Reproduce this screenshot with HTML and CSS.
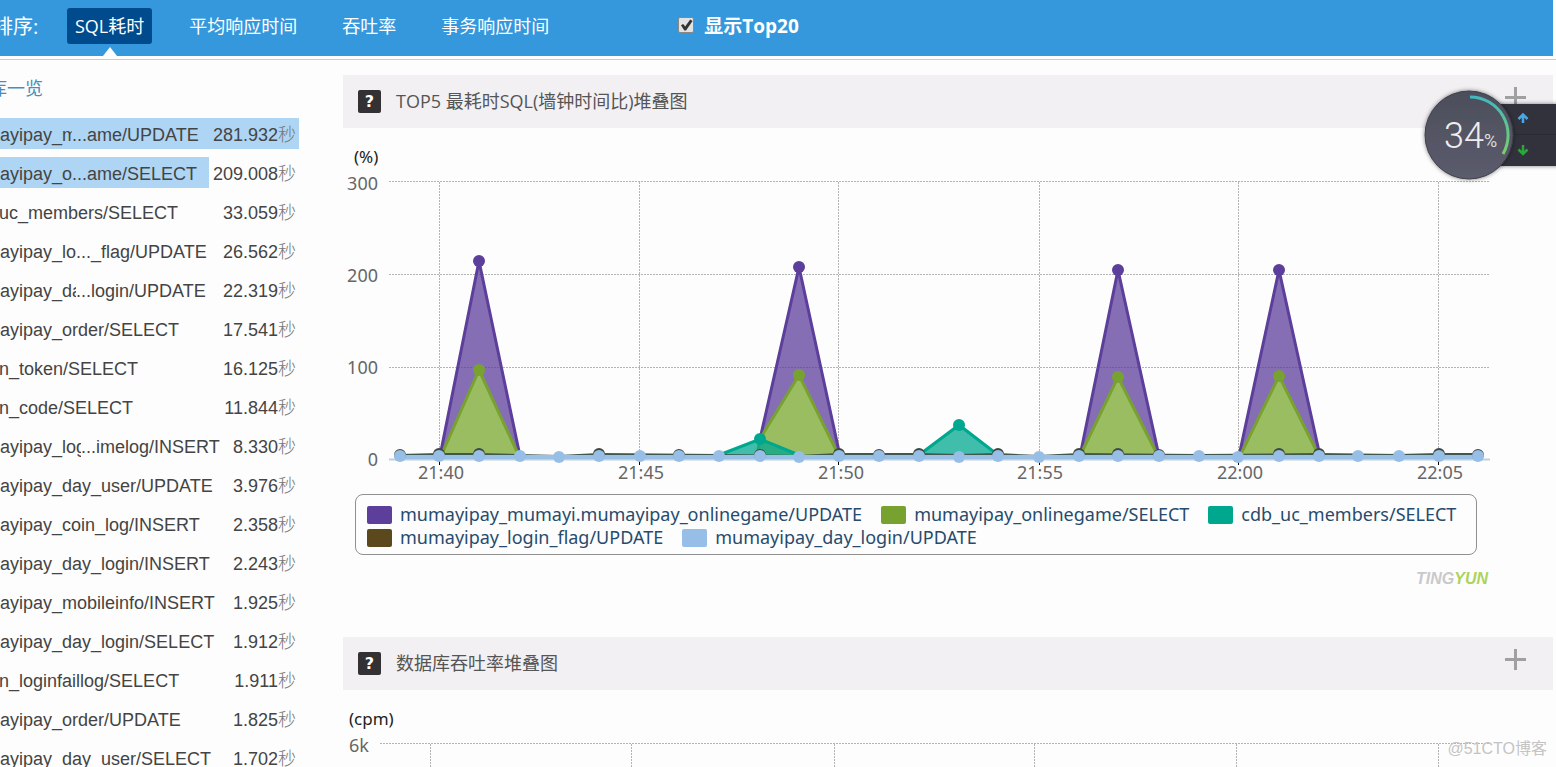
FILE: index.html
```html
<!DOCTYPE html>
<html lang="zh-CN">
<head>
<meta charset="utf-8">
<title>数据库一览</title>
<link rel="stylesheet" href="styles.css">
</head>
<body>
<header class="topbar">
  <span class="sort-label">排序:</span>
  <nav class="tabs">
    <button class="tab tab-active" type="button">SQL耗时</button>
    <button class="tab" type="button">平均响应时间</button>
    <button class="tab" type="button">吞吐率</button>
    <button class="tab" type="button">事务响应时间</button>
  </nav>
  <label class="top20" for="top20"><input class="check" id="top20" type="checkbox" checked>显示Top20</label>
</header>
<div class="layout">
  <aside class="sidebar">
    <a class="side-title" href="#">数据库一览</a>
    <ul class="sql-list">
      <li class="row"><span class="bar" style="width:100%"></span><span class="name"><span class="head" style="width:112px">mumayipay_m</span>...ame/UPDATE</span><span class="time">281.932<i class="unit">秒</i></span></li>
      <li class="row"><span class="bar" style="width:70%"></span><span class="name"><span class="head" style="width:112px">mumayipay_o</span>...ame/SELECT</span><span class="time">209.008<i class="unit">秒</i></span></li>
      <li class="row"><span class="name">cdb_uc_members/SELECT</span><span class="time">33.059<i class="unit">秒</i></span></li>
      <li class="row"><span class="name"><span class="head" style="width:116px">mumayipay_lo</span>..._flag/UPDATE</span><span class="time">26.562<i class="unit">秒</i></span></li>
      <li class="row"><span class="name"><span class="head" style="width:116px">mumayipay_da</span>...login/UPDATE</span><span class="time">22.319<i class="unit">秒</i></span></li>
      <li class="row"><span class="name">mumayipay_order/SELECT</span><span class="time">17.541<i class="unit">秒</i></span></li>
      <li class="row"><span class="name">admin_token/SELECT</span><span class="time">16.125<i class="unit">秒</i></span></li>
      <li class="row"><span class="name">admin_code/SELECT</span><span class="time">11.844<i class="unit">秒</i></span></li>
      <li class="row"><span class="name"><span class="head" style="width:121px">mumayipay_log</span>...imelog/INSERT</span><span class="time">8.330<i class="unit">秒</i></span></li>
      <li class="row"><span class="name">mumayipay_day_user/UPDATE</span><span class="time">3.976<i class="unit">秒</i></span></li>
      <li class="row"><span class="name">mumayipay_coin_log/INSERT</span><span class="time">2.358<i class="unit">秒</i></span></li>
      <li class="row"><span class="name">mumayipay_day_login/INSERT</span><span class="time">2.243<i class="unit">秒</i></span></li>
      <li class="row"><span class="name">mumayipay_mobileinfo/INSERT</span><span class="time">1.925<i class="unit">秒</i></span></li>
      <li class="row"><span class="name">mumayipay_day_login/SELECT</span><span class="time">1.912<i class="unit">秒</i></span></li>
      <li class="row"><span class="name">admin_loginfaillog/SELECT</span><span class="time">1.911<i class="unit">秒</i></span></li>
      <li class="row"><span class="name">mumayipay_order/UPDATE</span><span class="time">1.825<i class="unit">秒</i></span></li>
      <li class="row"><span class="name">mumayipay_day_user/SELECT</span><span class="time">1.702<i class="unit">秒</i></span></li>
    </ul>
  </aside>
  <main class="content">
    <section class="panel">
      <div class="panel-head">
        <button class="help" type="button" aria-label="帮助">?</button>
        <h2 class="panel-title">TOP5 最耗时SQL(墙钟时间比)堆叠图</h2>
        <button class="plus" type="button" aria-label="展开"></button>
      </div>
      <svg class="chart" viewBox="343 128 1210 358" role="img" aria-label="最耗时SQL堆叠图">
        <g class="grid">
          <path d="M389 181.500H1490M389 274.500H1490M389 367.500H1490"/>
          <path d="M439.500 182V459M639.500 182V459M838.500 182V459M1039.500 182V459M1238.500 182V459M1438.500 182V459"/>
        </g>
        <path class="axis" d="M389 459.500H1490"/>
        <path class="tick" d="M439.500 459V465M639.500 459V465M838.500 459V465M1039.500 459V465M1238.500 459V465M1438.500 459V465"/>
        <g class="purple">
          <path d="M440 456L479 261L520 456M760 439L799 267L840 456M1080 456L1118 270L1159 456M1239 456L1279 270L1320 456"/>
          <circle cx="479" cy="261" r="6"/><circle cx="799" cy="267" r="6"/><circle cx="1118" cy="270" r="6"/><circle cx="1279" cy="270" r="6"/>
        </g>
        <g class="green">
          <path d="M441 456L479 370L519 456M757 456L760 439L799 375L839 456M1080 456L1118 377L1158 456M1240 456L1279 376L1319 456"/>
          <circle cx="479" cy="370" r="6"/><circle cx="799" cy="375" r="6"/><circle cx="1118" cy="377" r="6"/><circle cx="1279" cy="376" r="6"/>
        </g>
        <g class="teal">
          <path d="M719 455L760 439L799 455M919 455L959 425L998 455"/>
          <circle cx="760" cy="439" r="6"/><circle cx="959" cy="425" r="6"/>
        </g>
        <path class="base-line" d="M400 455L439 454L479 454L559 456L599 454L719 455L799 456L839 454L919 454L959 455L998 454L1039 456L1079 454L1199 455L1319 454L1399 455L1439 454H1479"/>
        <path class="blue-area" d="M400 457H1479"/>
        <g class="brown-dots">
          <circle cx="400" cy="455" r="6"/><circle cx="439" cy="454" r="6"/><circle cx="479" cy="454" r="6"/><circle cx="599" cy="454" r="6"/><circle cx="679" cy="455" r="6"/><circle cx="839" cy="454" r="6"/><circle cx="760" cy="455" r="6"/><circle cx="879" cy="455" r="6"/><circle cx="919" cy="454" r="6"/><circle cx="998" cy="454" r="6"/><circle cx="1079" cy="454" r="6"/><circle cx="1118" cy="454" r="6"/><circle cx="1159" cy="455" r="6"/><circle cx="1279" cy="454" r="6"/><circle cx="1319" cy="454" r="6"/><circle cx="1439" cy="454" r="6"/><circle cx="1478" cy="455" r="6"/>
        </g>
        <g class="blue-dots">
          <circle cx="400" cy="456" r="6"/><circle cx="439" cy="456" r="6"/><circle cx="479" cy="456" r="6"/><circle cx="520" cy="456" r="6"/><circle cx="559" cy="457" r="6"/><circle cx="599" cy="456" r="6"/><circle cx="640" cy="456" r="6"/><circle cx="679" cy="456" r="6"/><circle cx="719" cy="456" r="6"/><circle cx="760" cy="456" r="6"/><circle cx="799" cy="457" r="6"/><circle cx="839" cy="456" r="6"/><circle cx="879" cy="456" r="6"/><circle cx="919" cy="456" r="6"/><circle cx="959" cy="457" r="6"/><circle cx="998" cy="456" r="6"/><circle cx="1039" cy="457" r="6"/><circle cx="1079" cy="456" r="6"/><circle cx="1118" cy="456" r="6"/><circle cx="1159" cy="456" r="6"/><circle cx="1199" cy="456" r="6"/><circle cx="1238" cy="457" r="6"/><circle cx="1279" cy="456" r="6"/><circle cx="1319" cy="456" r="6"/><circle cx="1358" cy="456" r="6"/><circle cx="1399" cy="456" r="6"/><circle cx="1439" cy="456" r="6"/><circle cx="1478" cy="456" r="6"/>
        </g>
        <text class="axis-unit" x="354" y="163">(%)</text>
        <g class="label label-y"><text x="378" y="190">300</text><text x="378" y="282">200</text><text x="378" y="374">100</text><text x="378" y="466">0</text></g>
        <g class="label label-x"><text x="441" y="479">21:40</text><text x="641" y="479">21:45</text><text x="841" y="479">21:50</text><text x="1040" y="479">21:55</text><text x="1240" y="479">22:00</text><text x="1440" y="479">22:05</text></g>
      </svg>
      <ul class="legend">
        <li class="key"><span class="swatch sw-purple"></span>mumayipay_mumayi.mumayipay_onlinegame/UPDATE</li>
        <li class="key"><span class="swatch sw-green"></span>mumayipay_onlinegame/SELECT</li>
        <li class="key"><span class="swatch sw-teal"></span>cdb_uc_members/SELECT</li>
        <li class="key"><span class="swatch sw-brown"></span>mumayipay_login_flag/UPDATE</li>
        <li class="key"><span class="swatch sw-blue"></span>mumayipay_day_login/UPDATE</li>
      </ul>
      <a class="brand" href="#">TING<span class="brand-yun">YUN</span></a>
    </section>
    <section class="panel">
      <div class="panel-head">
        <button class="help" type="button" aria-label="帮助">?</button>
        <h2 class="panel-title">数据库吞吐率堆叠图</h2>
        <button class="plus" type="button" aria-label="展开"></button>
      </div>
      <svg class="chart" viewBox="343 690 1210 100" role="img" aria-label="数据库吞吐率堆叠图">
        <g class="grid">
          <path d="M380 743.500H1490"/>
          <path d="M430.500 744V790M631.500 744V790M834.500 744V790M1034.500 744V790M1236.500 744V790M1438.500 744V790"/>
        </g>
        <text class="axis-unit" x="349" y="725">(cpm)</text>
        <g class="label label-y"><text x="369" y="752">6k</text></g>
      </svg>
    </section>
  </main>
</div>
<div class="meter">
  <svg class="meter-art" viewBox="1418 82 138 106" role="img" aria-label="34%">
    <defs>
      <linearGradient id="disc" x1="0" y1="0" x2="0" y2="1"><stop offset="0" stop-color="#4c4e5b"/><stop offset="1" stop-color="#5b5c6d"/></linearGradient>
      <linearGradient id="arc" x1="0" y1="0" x2="0" y2="1"><stop offset="0" stop-color="#43b9bd"/><stop offset="1" stop-color="#7ccd6b"/></linearGradient>
      <filter id="shade" x="-20%" y="-20%" width="140%" height="140%"><feDropShadow dx="0" dy="0" stdDeviation="2" flood-opacity=".5"/></filter>
    </defs>
    <g filter="url(#shade)"><path d="M1469 104H1560V166H1469Z" fill="#32323e"/></g>
    <path d="M1500 134.500H1556" stroke="#292a34"/>
    <circle cx="1469" cy="135" r="44" fill="url(#disc)" stroke="#3f404a" filter="url(#shade)"/>
    <path d="M1470 97A38 38 0 0 1 1503 154" fill="none" stroke="url(#arc)" stroke-width="3"/>
    <path d="M1523 123V115M1518.500 119L1523 114.500L1527.500 119" fill="none" stroke="#49a7e8" stroke-width="2.500"/>
    <path d="M1523 145V153M1518.500 149.500L1523 154L1527.500 149.500" fill="none" stroke="#29a83a" stroke-width="2.500"/>
    <text class="meter-num" x="1444" y="148">34</text>
    <text class="meter-pct" x="1484" y="147">%</text>
  </svg>
</div>
<div class="watermark">@51CTO博客</div>
</body>
</html>
```
FILE: styles.css
```css
* { box-sizing: border-box; }

body {
  margin: 0;
  height: 100vh;
  overflow: hidden;
  position: relative;
  background: #fdfdfd;
  color: #444;
  font-family: "Open Sans", "Noto Sans CJK SC", sans-serif;
  font-size: 18px;
}

button {
  border: 0;
  padding: 0;
  background: none;
  font: inherit;
  color: inherit;
}

a { text-decoration: none; }

.topbar {
  display: flex;
  align-items: center;
  height: 56px;
  margin-right: 3px;
  padding-bottom: 4px;
  background: #3598dc;
  color: #fff;
}

.sort-label {
  margin-left: -7px;
  width: 74px;
  padding-bottom: 2px;
  font-size: 20px;
}

.tabs {
  display: flex;
  gap: 29px;
}

.tab {
  position: relative;
  height: 36px;
  padding: 0 8px 2px;
  border-radius: 3px;
}

.tab-active { background: #004b8d; }

.tab-active::after {
  content: "";
  position: absolute;
  left: 50%;
  top: 39px;
  margin-left: -7px;
  border: 7px solid transparent;
  border-top: 0;
  border-bottom: 9px solid #fdfdfd;
}

.top20 {
  display: flex;
  align-items: center;
  gap: 10px;
  margin-left: 121px;
  padding-bottom: 2px;
  font-size: 19px;
  font-weight: 700;
}

.check {
  appearance: none;
  width: 16px;
  height: 16px;
  margin: 0;
  border: 1px solid #888;
  border-radius: 2px;
  background: #e2e2e2;
}

.check:checked::before {
  content: "";
  display: block;
  height: 14px;
  background: #333;
  clip-path: polygon(12% 52%, 28% 42%, 42% 60%, 78% 10%, 95% 22%, 48% 90%, 36% 90%);
}

.layout {
  display: flex;
  align-items: flex-start;
  margin-top: 3px;
  padding: 15px 3px 0 0;
  border-top: 1px solid #ccc;
}

.sidebar {
  flex: 0 0 299px;
  overflow: hidden;
}

.side-title {
  display: block;
  margin-left: -47px;
  height: 43px;
  line-height: 27px;
  color: #438fbd;
}

.sql-list {
  display: grid;
  gap: 8px;
  margin: 0;
  padding: 0;
  list-style: none;
}

.row {
  position: relative;
  display: flex;
  justify-content: space-between;
  height: 31px;
  padding-right: 3px;
  font-family: "Liberation Sans", "Noto Sans CJK SC", sans-serif;
  line-height: 34px;
  white-space: nowrap;
}

.bar {
  position: absolute;
  left: 0;
  top: 0;
  height: 31px;
  background: #aed5f3;
}

.bar ~ span { z-index: 1; }

.name {
  display: flex;
  margin-left: -40px;
}

.head { overflow: hidden; }

.unit {
  color: #777;
  font-style: normal;
  font-weight: 300;
}

.content {
  flex: 1;
  min-width: 0;
  margin-left: 44px;
}

.panel-head {
  display: flex;
  align-items: center;
  height: 53px;
  padding: 0 27px 0 15px;
  background: #f2f0f3;
}

.help {
  width: 23px;
  height: 23px;
  border-radius: 2px;
  background: #333134;
  color: #fff;
  font-family: "DejaVu Sans", sans-serif;
  font-size: 16px;
  font-weight: 700;
  line-height: 24px;
}

.panel-title {
  flex: 1;
  margin: 0 0 0 15px;
  padding-bottom: 3px;
  color: #555;
  font-size: 18px;
  font-weight: 400;
}

.plus {
  width: 21px;
  height: 21px;
  margin-bottom: 8px;
  background:
    linear-gradient(#a09fa2, #a09fa2) center / 21px 3px no-repeat,
    linear-gradient(#a09fa2, #a09fa2) center / 3px 21px no-repeat;
}

.chart {
  display: block;
  width: 100%;
}

.grid path { stroke: #b4b4b4; stroke-dasharray: 2 1; }
.axis { stroke: #c0cfe0; stroke-width: 2; }
.tick { stroke: #000; }
.purple path { fill: #5c3e9bbf; stroke: #5c3e9b; stroke-width: 3; }
.purple circle { fill: #5c3e9b; }
.green path { fill: #9bbd62; stroke: #78a22f; stroke-width: 3; }
.green circle { fill: #78a22f; }
.teal path { fill: #00a78fbf; stroke: #00a78f; stroke-width: 3; }
.teal circle { fill: #00a78f; }
.base-line { fill: none; stroke: #405850; stroke-width: 2; }
.blue-area { stroke: #9bc0e6; stroke-width: 4; }
.brown-dots { fill: #3f4840; }
.blue-dots { fill: #96bee6; }

.axis-unit {
  fill: #222;
  font: 17px "Noto Sans", sans-serif;
}

.label {
  fill: #666;
  font: 18px "Noto Sans", sans-serif;
}

.label-y { text-anchor: end; }
.label-x { text-anchor: middle; }

.legend {
  display: flex;
  flex-wrap: wrap;
  column-gap: 19px;
  margin: 8px 76px 0 12px;
  padding: 8px 10px 5px 11px;
  border: 1px solid #909090;
  border-radius: 8px;
  list-style: none;
  color: #274b6d;
  font: 18px/23px "Noto Sans", sans-serif;
}

.key {
  display: flex;
  align-items: center;
  gap: 8px;
}

.swatch {
  width: 25px;
  height: 18px;
  border-radius: 2px;
}

.sw-purple { background: #5c3e9b; }
.sw-green { background: #78a22f; }
.sw-teal { background: #00a78f; }
.sw-brown { background: #5b491d; }
.sw-blue { background: #96bee6; }

.brand {
  display: block;
  height: 82px;
  padding: 12px 65px 0 0;
  text-align: right;
  color: #c9c9cc;
  font: italic 700 16px/24px "Liberation Sans", sans-serif;
}

.brand-yun { color: #add35c; }

.meter {
  position: absolute;
  right: 0;
  top: 82px;
  width: 138px;
}

.meter-art {
  display: block;
  width: 100%;
}

.meter-num {
  fill: #eee;
  font: 300 36px Roboto, sans-serif;
}

.meter-pct {
  fill: #ddd;
  font: 18px Roboto, sans-serif;
}

.watermark {
  position: absolute;
  right: 9px;
  bottom: 6px;
  color: #c4c4c4;
  font: 16px/24px "Liberation Sans", "Noto Sans CJK SC", sans-serif;
}
```
